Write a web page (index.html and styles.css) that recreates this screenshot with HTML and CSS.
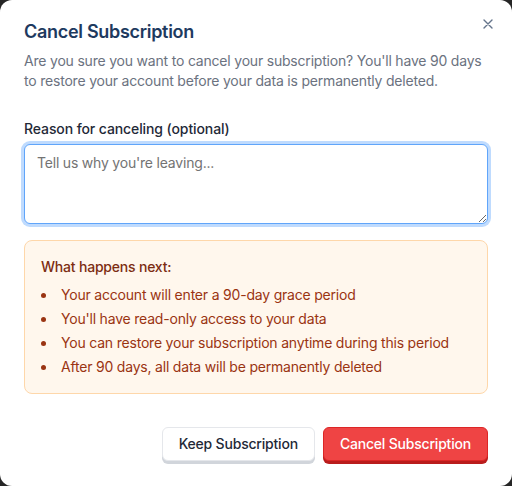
FILE: index.html
```html
<!DOCTYPE html>
<html lang="en">
<head>
<meta charset="utf-8">
<title>Cancel Subscription</title>
<link rel="stylesheet" href="styles.css">
</head>
<body>
<div class="modal">
  <button class="close" aria-label="Close">
    <svg width="10" height="10" viewBox="0 0 10 10"><path d="M1 1L9 9M9 1L1 9" stroke="#64748b" stroke-width="1.4" stroke-linecap="round"/></svg>
  </button>
  <h2 class="title">Cancel Subscription</h2>
  <p class="desc">Are you sure you want to cancel your subscription? You'll have 90 days to restore your account before your data is permanently deleted.</p>
  <label class="label" for="reason">Reason for canceling (optional)</label>
  <textarea id="reason" class="textarea" placeholder="Tell us why you're leaving..."></textarea>
  <div class="notice">
    <div class="notice-title">What happens next:</div>
    <ul class="notice-list">
      <li>Your account will enter a 90-day grace period</li>
      <li>You'll have read-only access to your data</li>
      <li>You can restore your subscription anytime during this period</li>
      <li>After 90 days, all data will be permanently deleted</li>
    </ul>
  </div>
  <div class="actions">
    <button class="btn btn-keep">Keep Subscription</button>
    <button class="btn btn-cancel">Cancel Subscription</button>
  </div>
</div>
</body>
</html>
```
FILE: styles.css
```css
html, body {
  margin: 0;
  padding: 0;
  background: #262626;
}
body {
  font-family: Inter, "Noto Sans", sans-serif;
  letter-spacing: -0.2px;
}
.modal {
  position: relative;
  box-sizing: border-box;
  width: 512px;
  height: 486px;
  background: #ffffff;
  border-radius: 12px;
  padding: 18px 24px 0 24px;
  display: flex;
  flex-direction: column;
}
.close {
  position: absolute;
  top: 14px;
  right: 14px;
  width: 20px;
  height: 20px;
  padding: 0;
  border: 0;
  background: transparent;
  display: flex;
  align-items: center;
  justify-content: center;
}
.title {
  margin: 0;
  font-size: 18px;
  line-height: 28px;
  font-weight: 600;
  letter-spacing: -0.3px;
  color: #1e3a5f;
}
.desc {
  margin: 5px 0 0 0;
  font-size: 14px;
  line-height: 20px;
  color: #6b7280;
}
.label {
  margin-top: 28px;
  font-size: 14px;
  line-height: 20px;
  font-weight: 500;
  letter-spacing: -0.1px;
  color: #1f2937;
}
.textarea {
  margin-top: 5px;
  box-sizing: border-box;
  width: 464px;
  height: 80px;
  padding: 8px 12px;
  border: 1px solid #60a5fa;
  border-radius: 6px;
  box-shadow: 0 0 0 3px #bfdbfe;
  font-family: Inter, "Noto Sans", sans-serif;
  font-size: 14px;
  line-height: 20px;
  letter-spacing: -0.2px;
  color: #1f2937;
  outline: none;
  resize: vertical;
}
.textarea::placeholder {
  color: #737373;
}
.notice {
  margin-top: 16px;
  box-sizing: border-box;
  background: #fff7ed;
  border: 1px solid #fed7aa;
  border-radius: 8px;
  padding: 16px;
}
.notice-title {
  font-size: 14px;
  line-height: 20px;
  font-weight: 500;
  color: #7c2d12;
}
.notice-list {
  margin: 8px 0 0 0;
  padding: 0;
  list-style: none;
  font-size: 14px;
  line-height: 20px;
  color: #9a3412;
}
.notice-list li {
  display: flex;
  align-items: center;
}
.notice-list li::before {
  content: "";
  flex: none;
  width: 5px;
  height: 5px;
  border-radius: 50%;
  background: #9a3412;
  margin: 1px 15px 0 0;
}
.notice-list li + li {
  margin-top: 4px;
}
.actions {
  margin-top: 33px;
  display: flex;
  justify-content: flex-end;
  gap: 8px;
}
.btn {
  font-family: Inter, "Noto Sans", sans-serif;
  font-size: 14px;
  line-height: 20px;
  font-weight: 500;
  letter-spacing: -0.2px;
  padding: 6px 16px;
  border-radius: 6px;
  cursor: pointer;
}
.btn-keep {
  background: #ffffff;
  color: #1f2937;
  border: 1px solid #e5e7eb;
  box-shadow: 0 3px 0 #d1d5db;
}
.btn-cancel {
  background: #ef4444;
  color: #ffffff;
  border: 1px solid #dc2626;
  box-shadow: 0 3px 0 #b91c1c;
}
```
